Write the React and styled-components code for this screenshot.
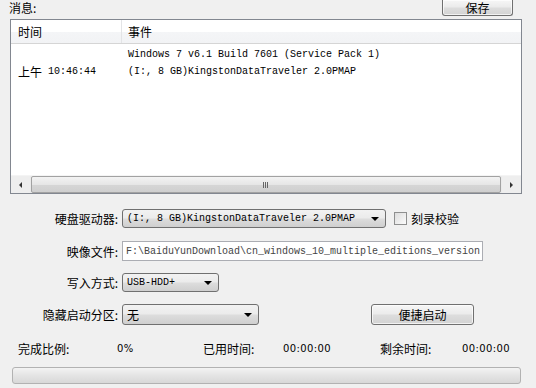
import styled, { createGlobalStyle } from "styled-components";

const GlobalStyle = createGlobalStyle`
  html, body {
    margin: 0;
    padding: 0;
    background: #f0f0f0;
  }
  body {
    font-family: "Noto Sans CJK SC", "Liberation Sans", sans-serif;
    font-size: 12px;
    color: #000;
  }
`;

const Window = styled.div`
  width: 536px;
  height: 388px;
  overflow: hidden;
  display: flex;
  flex-direction: column;
  background: #f0f0f0;
`;

const TopRow = styled.div`
  height: 19px;
  display: flex;
  align-items: flex-start;
  justify-content: space-between;
  padding: 0 23px 0 9px;
`;

const Caption = styled.span`
  line-height: 18px;
  margin-top: -1px;
`;

const PushButton = styled.button`
  font-family: "Noto Sans CJK SC", sans-serif;
  font-size: 12px;
  color: #000;
  box-sizing: border-box;
  width: ${(p) => p.$w}px;
  height: ${(p) => p.$h}px;
  padding: 0;
  border: 1px solid #707070;
  border-top-width: ${(p) => (p.$cut ? 0 : 1)}px;
  border-radius: ${(p) => (p.$cut ? "0 0 3px 3px" : "3px")};
  background: linear-gradient(#f6f6f6 0%, #ebebeb 48%, #dddddd 52%, #d3d3d3 100%);
  box-shadow: inset 0 0 0 1px rgba(255, 255, 255, 0.7);
  display: flex;
  align-items: center;
  justify-content: center;
  line-height: 1;
`;

const ListBox = styled.div`
  margin: 0 14px 0 10px;
  height: 175px;
  border: 1px solid #828790;
  background: #fff;
  display: flex;
  flex-direction: column;
  box-sizing: border-box;
`;

const Header = styled.div`
  height: 23px;
  display: grid;
  grid-template-columns: 111px 1fr;
  background: linear-gradient(#ffffff 0%, #ffffff 50%, #f4f5f7 51%, #f2f3f5 100%);
  border-bottom: 1px solid #d5d5d5;
`;

const HeaderCell = styled.div`
  display: flex;
  align-items: center;
  padding-left: ${(p) => p.$pad}px;
  border-right: ${(p) => (p.$sep ? "1px solid #e3e4e6" : "none")};
  line-height: 1;
`;

const Body = styled.div`
  flex: 1;
  display: grid;
  grid-template-columns: 111px 1fr;
  align-content: start;
  padding-top: 2px;
`;

const TimeCell = styled.div`
  padding-left: 7px;
  display: flex;
  align-items: flex-end;
  height: 34px;
  line-height: 17px;
  gap: 6px;
`;

const Mono = styled.span`
  font-family: "Liberation Mono", "DejaVu Sans Mono", monospace;
  font-size: 10px;
  white-space: pre;
  color: ${(p) => p.$color || "#000"};
`;

const EventCell = styled.div`
  padding-left: 6px;
  display: flex;
  flex-direction: column;
  line-height: 17px;
`;

const ScrollBar = styled.div`
  height: 17px;
  display: flex;
  align-items: stretch;
  background: #eaeaea;
  border-top: 1px solid #f4f4f4;
`;

const ScrollArrow = styled.div`
  width: 19px;
  display: flex;
  align-items: center;
  justify-content: center;
  background: #eeeeee;
`;

const ArrowTri = styled.span`
  width: 0;
  height: 0;
  border-top: 3px solid transparent;
  border-bottom: 3px solid transparent;
  ${(p) =>
    p.$dir === "left"
      ? "border-right: 3px solid #333;"
      : "border-left: 3px solid #333;"}
`;

const Thumb = styled.div`
  flex: 1;
  margin: 0 1px;
  border: 1px solid #a2a2a2;
  border-radius: 2px;
  background: linear-gradient(#f3f3f3 0%, #e6e6e6 50%, #d6d6d6 51%, #cfcfcf 100%);
  display: flex;
  align-items: center;
  justify-content: center;
`;

const Grip = styled.span`
  width: 6px;
  height: 6px;
  background: repeating-linear-gradient(90deg, #666 0 1px, transparent 1px 2px);
`;

const Form = styled.div`
  display: flex;
  flex-direction: column;
  margin-top: 15px;
`;

const FormRow = styled.div`
  display: grid;
  grid-template-columns: 122px auto auto;
  justify-content: start;
  align-items: center;
  height: ${(p) => p.$h}px;
  margin-top: ${(p) => p.$mt || 0}px;
`;

const Label = styled.span`
  text-align: right;
  padding-right: 4px;
`;

const Combo = styled.div`
  box-sizing: border-box;
  width: ${(p) => p.$w}px;
  height: ${(p) => p.$h}px;
  border: 1px solid #707070;
  border-radius: 3px;
  background: linear-gradient(#f2f2f2 0%, #ebebeb 48%, #dddddd 52%, #cfcfcf 100%);
  display: flex;
  align-items: center;
  padding: 0 6px 0 4px;
  justify-content: space-between;
`;

const ComboArrow = styled.span`
  width: 0;
  height: 0;
  border-left: 4px solid transparent;
  border-right: 4px solid transparent;
  border-top: 4px solid #000;
`;

const CheckWrap = styled.label`
  display: flex;
  align-items: center;
  gap: 4px;
  margin-left: 8px;
`;

const CheckBox = styled.span`
  width: 11px;
  height: 11px;
  border: 1px solid #8e8f8f;
  background: linear-gradient(135deg, #dcdcdc, #fbfbfb);
`;

const TextInput = styled.div`
  box-sizing: border-box;
  width: 361px;
  height: 20px;
  border: 1px solid #abadb3;
  background: #fff;
  display: flex;
  align-items: center;
  padding-left: 3px;
  overflow: hidden;
`;

const ButtonCell = styled.div`
  margin-left: 112px;
`;

const StatusRow = styled.div`
  display: grid;
  grid-template-columns: 99px 86px 80px 97px 82px auto;
  padding-left: 18px;
  margin-top: 14px;
  height: 18px;
  align-items: center;
`;

const Digits = styled.span`
  font-family: "DejaVu Sans", sans-serif;
  font-size: 10px;
  letter-spacing: 0.4px;
`;

const Progress = styled.div`
  margin: 10px 15px 0 12px;
  height: 17px;
  box-sizing: border-box;
  border: 1px solid #b2b2b2;
  border-radius: 3px;
  background: linear-gradient(#f3f3f3 0%, #e4e4e4 50%, #d8d8d8 100%);
`;

export default function App() {
  return (
    <Window>
      <GlobalStyle />
      <TopRow>
        <Caption>消息:</Caption>
        <PushButton $w={71} $h={16} $cut>
          保存
        </PushButton>
      </TopRow>

      <ListBox>
        <Header>
          <HeaderCell $pad={7} $sep>
            时间
          </HeaderCell>
          <HeaderCell $pad={6}>事件</HeaderCell>
        </Header>
        <Body>
          <TimeCell>
            <span>上午</span>
            <Mono>10:46:44</Mono>
          </TimeCell>
          <EventCell>
            <Mono>Windows 7 v6.1 Build 7601 (Service Pack 1)</Mono>
            <Mono>(I:, 8 GB)KingstonDataTraveler 2.0PMAP</Mono>
          </EventCell>
        </Body>
        <ScrollBar>
          <ScrollArrow>
            <ArrowTri $dir="left" />
          </ScrollArrow>
          <Thumb>
            <Grip />
          </Thumb>
          <ScrollArrow>
            <ArrowTri $dir="right" />
          </ScrollArrow>
        </ScrollBar>
      </ListBox>

      <Form>
        <FormRow $h={19}>
          <Label>硬盘驱动器:</Label>
          <Combo $w={264} $h={19}>
            <Mono>(I:, 8 GB)KingstonDataTraveler 2.0PMAP</Mono>
            <ComboArrow />
          </Combo>
          <CheckWrap>
            <CheckBox />
            <span>刻录校验</span>
          </CheckWrap>
        </FormRow>

        <FormRow $h={20} $mt={13}>
          <Label>映像文件:</Label>
          <TextInput>
            <Mono $color="#444">F:\BaiduYunDownload\cn_windows_10_multiple_editions_version</Mono>
          </TextInput>
        </FormRow>

        <FormRow $h={19} $mt={12}>
          <Label>写入方式:</Label>
          <Combo $w={97} $h={19}>
            <Mono>USB-HDD+</Mono>
            <ComboArrow />
          </Combo>
        </FormRow>

        <FormRow $h={21} $mt={12}>
          <Label>隐藏启动分区:</Label>
          <Combo $w={137} $h={21}>
            <span>无</span>
            <ComboArrow />
          </Combo>
          <ButtonCell>
            <PushButton $w={103} $h={21}>
              便捷启动
            </PushButton>
          </ButtonCell>
        </FormRow>
      </Form>

      <StatusRow>
        <span>完成比例:</span>
        <Digits>0%</Digits>
        <span>已用时间:</span>
        <Digits>00:00:00</Digits>
        <span>剩余时间:</span>
        <Digits>00:00:00</Digits>
      </StatusRow>

      <Progress />
    </Window>
  );
}
